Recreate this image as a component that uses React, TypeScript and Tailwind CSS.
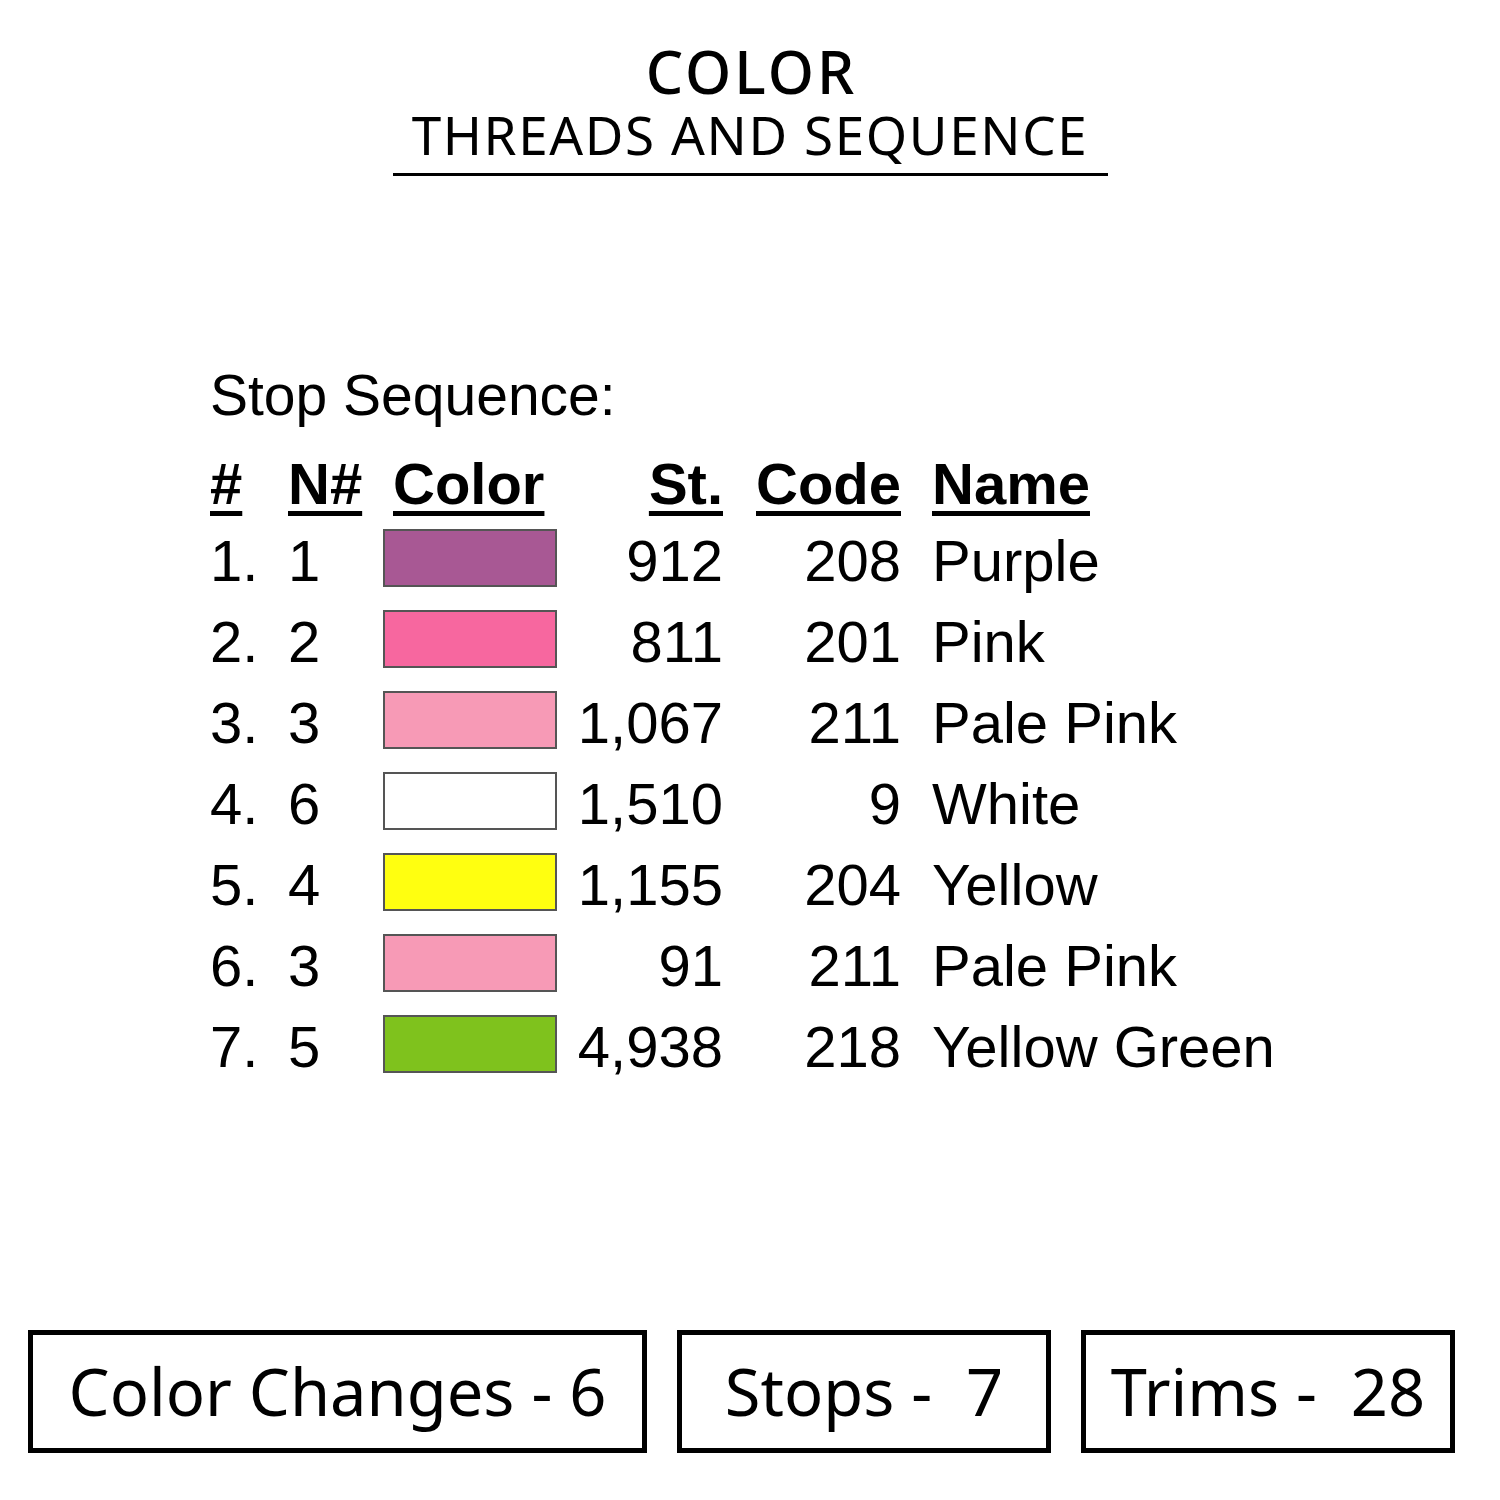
const rows = [
  { n: "1.", nn: "1", color: "#a85894", st: "912", code: "208", name: "Purple" },
  { n: "2.", nn: "2", color: "#f7679f", st: "811", code: "201", name: "Pink" },
  { n: "3.", nn: "3", color: "#f79ab6", st: "1,067", code: "211", name: "Pale Pink" },
  { n: "4.", nn: "6", color: "#ffffff", st: "1,510", code: "9", name: "White" },
  { n: "5.", nn: "4", color: "#ffff10", st: "1,155", code: "204", name: "Yellow" },
  { n: "6.", nn: "3", color: "#f79ab6", st: "91", code: "211", name: "Pale Pink" },
  { n: "7.", nn: "5", color: "#7fc21d", st: "4,938", code: "218", name: "Yellow Green" },
];

const stats = [
  { label: "Color Changes - 6", w: "w-[619px]" },
  { label: "Stops -  7", w: "w-[374px]" },
  { label: "Trims -  28", w: "w-[374px]" },
];

const head = "underline decoration-[5px] underline-offset-[7px]";

export default function App() {
  return (
    <div className="w-[1500px] h-[1500px] bg-white text-black flex flex-col">
      <header className="pt-[44px] flex flex-col items-center font-['Noto_Sans',sans-serif]">
        <h1 className="text-[59px] leading-[54px] font-medium tracking-[3px] pl-[3px]">COLOR</h1>
        <h2 className="mt-[12px] text-[53px] leading-[50px] font-normal tracking-[1.6px]">
          THREADS AND SEQUENCE
        </h2>
        <div className="mt-[13px] w-[715px] h-[3px] bg-black" />
      </header>

      <section className="ml-[210px] mt-[191px] font-['Liberation_Sans',Arial,sans-serif]">
        <p className="text-[57px] leading-none">Stop Sequence:</p>

        <div className="mt-[24px] grid grid-cols-[78px_95px_174px_166px_178px_auto] items-center">
          <div className="contents text-[58px] leading-[72px] font-bold">
            <div><span className={head}>#</span></div>
            <div><span className={head}>N#</span></div>
            <div className="pl-[10px]"><span className={head}>Color</span></div>
            <div className="text-right"><span className={head}>St.</span></div>
            <div className="text-right"><span className={head}>Code</span></div>
            <div className="pl-[31px]"><span className={head}>Name</span></div>
          </div>

          {rows.map((r, i) => (
            <div key={i} className="contents text-[58px] leading-[81px]">
              <div>{r.n}</div>
              <div>{r.nn}</div>
              <div className="flex items-center">
                <div
                  className="w-[174px] h-[58px] -mt-[6px] border-2 border-[#555]"
                  style={{ backgroundColor: r.color }}
                />
              </div>
              <div className="text-right">{r.st}</div>
              <div className="text-right">{r.code}</div>
              <div className="pl-[31px]">{r.name}</div>
            </div>
          ))}
        </div>
      </section>

      <footer className="mt-auto mb-[47px] pl-[28px] flex gap-[30px] font-['Noto_Sans',sans-serif]">
        {stats.map((s) => (
          <div
            key={s.label}
            className={`${s.w} h-[123px] border-[5px] border-black flex items-center justify-center`}
          >
            <span className="text-[65px] leading-none whitespace-pre">{s.label}</span>
          </div>
        ))}
      </footer>
    </div>
  );
}
